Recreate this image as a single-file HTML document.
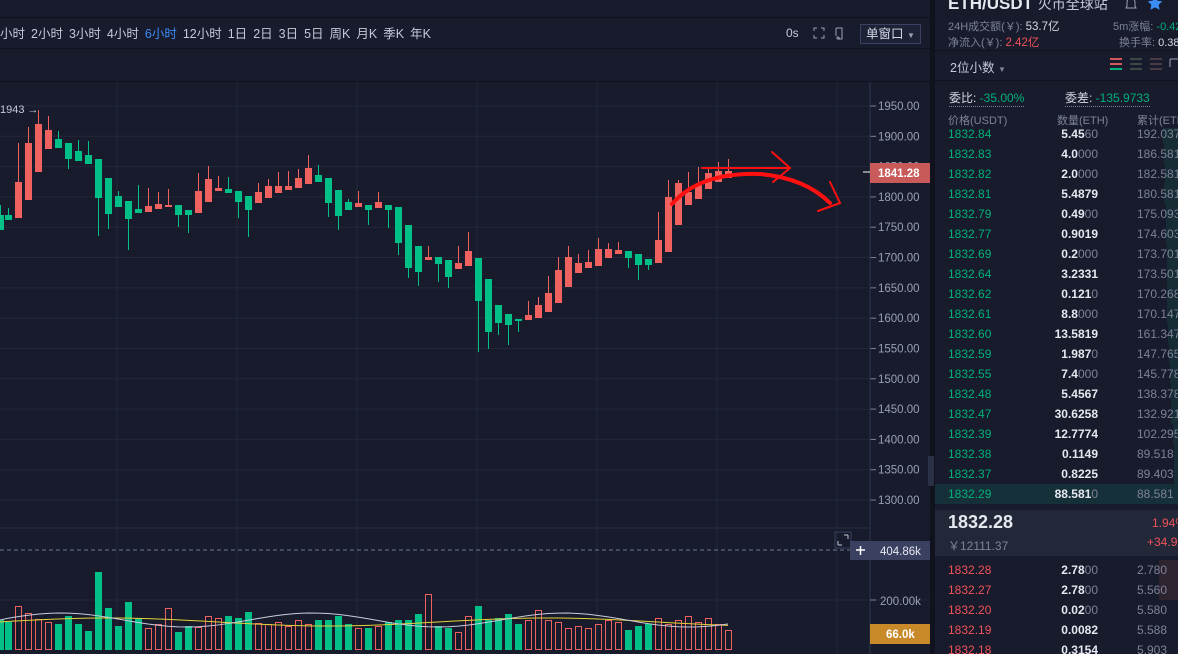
<!DOCTYPE html>
<html><head><meta charset="utf-8"><style>
*{margin:0;padding:0;box-sizing:border-box}
body{width:1178px;height:654px;overflow:hidden;background:#171b2c;font-family:"Liberation Sans","Noto Sans CJK SC",sans-serif;color:#b8bdd0;position:relative}
.abs{position:absolute;white-space:nowrap}
.tb span{margin-right:6px;font-size:12.5px;color:#c4c8d8}
.ob{font-size:12px}
.row{position:absolute;left:0;width:243px;height:20px;line-height:20px}
.row .p{position:absolute;left:13px}
.row .a{position:absolute;right:80px;color:#e6e8f0;font-weight:bold}
.row .a i{font-style:normal;color:#7d8297;font-weight:normal}
.row .c{position:absolute;left:202px;color:#7d8297}
.g{color:#00b07a}.r{color:#f0525a}
</style></head><body>
<div class="abs" style="left:0;top:0;width:930px;height:18px;background:#171b2c;border-bottom:1px solid #0f1220"></div>
<div class="abs tb" style="left:0;top:23px">
<span>小时</span><span>2小时</span><span>3小时</span><span>4小时</span><span style="color:#3b8cf5">6小时</span><span>12小时</span><span>1日</span><span>2日</span><span>3日</span><span>5日</span><span>周K</span><span>月K</span><span>季K</span><span>年K</span></div>
<div class="abs" style="left:786px;top:26px;font-size:12px;color:#c4c8d8">0s</div>
<svg class="abs" style="left:812px;top:26px" width="40" height="16"><g stroke="#9aa0b4" fill="none" stroke-width="1"><path d="M2 5V2h3M9 2h3v3M12 9v3H9M5 12H2V9"/><path d="M24 2h6v11h-3M24 2v8M24 12h4M26 10v4"/></g></svg>
<div class="abs" style="left:860px;top:24px;width:61px;height:20px;border:1px solid #3a4160;background:#1d2237;font-size:12.5px;color:#d6d9e4;line-height:18px;padding-left:5px">单窗口 <span style="font-size:8px;color:#9aa0b4">▼</span></div>
<div class="abs" style="left:0;top:48px;width:930px;height:1px;background:#0f1220"></div>
<div class="abs" style="left:0;top:81px;width:930px;height:1px;background:#0f1220"></div>

<svg class="abs" style="left:0;top:82px" width="930" height="572" id="ch"></svg>

<div class="abs" style="left:930px;top:0;width:5px;height:654px;background:#10131e"></div>
<div class="abs" style="left:928px;top:456px;width:6px;height:30px;background:#2a3045"></div>

<div class="abs ob" style="left:935px;top:0;width:243px;height:654px;background:#171b2c">
<div class="abs" style="left:13px;top:-6px;font-size:17px;color:#e6e8f0;font-weight:bold">ETH/USDT <span style="font-weight:normal;font-size:14px;color:#c4c8d8">火币全球站</span></div>
<svg class="abs" style="left:190px;top:-4px" width="60" height="16"><path d="M6 2c-3 0-4 2-4 5v3l-1 2h10l-1-2V7c0-3-1-5-4-5z" fill="none" stroke="#9aa0b4"/><path d="M30 0l2.3 4.6 5 .7-3.6 3.5.9 5-4.6-2.4-4.6 2.4.9-5-3.6-3.5 5-.7z" fill="#3b8cf5"/><path d="M48 1h6v12" stroke="#9aa0b4" fill="none"/></svg>
<div class="abs" style="left:13px;top:18px;font-size:11px;color:#7d8297">24H成交额(￥): <span style="color:#d6d9e4;font-size:11.5px">53.7亿</span></div>
<div class="abs" style="left:178px;top:18px;font-size:11px;color:#7d8297">5m涨幅: <span class="g">-0.42%</span></div>
<div class="abs" style="left:13px;top:34px;font-size:11px;color:#7d8297">净流入(￥): <span class="r" style="font-size:11.5px">2.42亿</span></div>
<div class="abs" style="left:184px;top:34px;font-size:11px;color:#7d8297">换手率: <span style="color:#d6d9e4">0.38%</span></div>
<div class="abs" style="left:0;top:50px;width:243px;height:1px;background:#0f1220"></div>
<div class="abs" style="left:15px;top:57px;font-size:12.5px;color:#c4c8d8">2位小数 <span style="font-size:8px;color:#7d8297">▼</span></div>
<svg class="abs" style="left:175px;top:57px" width="68" height="14"><g stroke-width="2"><path d="M0 2h12M0 7h12" stroke="#d25a5a"/><path d="M0 12h12" stroke="#00b07a"/><path d="M20 2h12M20 7h12M20 12h12" stroke="#3a4a4a"/><path d="M40 2h12M40 7h12M40 12h12" stroke="#4a3a44"/></g><path d="M60 2h8M60 2v8" stroke="#9aa0b4" fill="none"/></svg>
<div class="abs" style="left:0;top:80px;width:243px;height:1px;background:#0f1220"></div>
<div class="abs" style="left:14px;top:89px;font-size:12px;color:#d6d9e4;border-bottom:1px dotted #7d8297">委比: <span class="g">-35.00%</span></div>
<div class="abs" style="left:130px;top:89px;font-size:12px;color:#d6d9e4;border-bottom:1px dotted #7d8297">委差: <span class="g">-135.9733</span></div>
<div class="abs" style="left:13px;top:112px;font-size:11px;color:#7d8297">价格(USDT)</div>
<div class="abs" style="left:122px;top:112px;font-size:11px;color:#7d8297">数量(ETH)</div>
<div class="abs" style="left:202px;top:112px;font-size:11px;color:#7d8297">累计(ETH)</div>
<div class="abs" style="left:0;top:128px;width:243px;height:377px;overflow:hidden" id="bids"></div>
<div class="abs" style="left:0;top:510px;width:243px;height:46px;background:#232839"></div>
<div class="abs" style="left:13px;top:512px;font-size:18px;color:#e6e8f0;font-weight:bold">1832.28</div>
<div class="abs" style="left:13px;top:537px;font-size:12px;color:#7d8297">￥12111.37</div>
<div class="abs r" style="left:217px;top:516px;font-size:12px">1.94%</div>
<div class="abs r" style="left:212px;top:535px;font-size:12px">+34.92</div>
<div class="abs" style="left:0;top:560px;width:243px;height:94px;overflow:hidden" id="asks"></div>
</div>

<script>
const G='#00c087',R='#f0625f';
const C=[[0,215,230,205,'g'],
[8,215,220,208,'g'],[18,182,218,143,'r'],[28,143,200,127,'r'],[38,124,172,110,'r'],[48,130,149,116,'r'],[58,139,148,131,'g'],[68,143,159,169,'g'],[78,151,161,140,'g'],[88,155,164,141,'g'],[98,159,198,236,'g'],[108,178,214,229,'g'],[118,196,207,191,'g'],[128,201,219,250,'g'],[138,209,213,185,'g'],[148,206,212,188,'r'],[158,204,209,192,'r'],[168,205,207,189,'r'],[178,205,215,227,'g'],[188,210,215,233,'g'],[198,191,213,173,'r'],[208,179,202,166,'r'],[218,188,191,176,'r'],[228,189,193,177,'g'],[238,191,202,218,'g'],[248,196,210,237,'g'],[258,192,203,183,'r'],[268,186,198,179,'r'],[278,186,193,172,'r'],[288,186,190,171,'r'],[298,178,188,169,'r'],[308,168,184,155,'r'],[318,175,182,165,'g'],[328,178,203,217,'g'],[338,190,216,230,'g'],[348,202,210,199,'g'],[358,203,207,191,'r'],[368,205,210,225,'g'],[378,202,208,192,'r'],[388,205,210,228,'g'],[398,207,243,255,'g'],[408,225,268,278,'g'],[418,246,272,286,'g'],[428,257,260,246,'r'],[438,257,264,282,'g'],[448,260,277,288,'g'],[458,263,269,246,'r'],[468,251,266,232,'r'],[478,258,301,352,'g'],[488,279,332,349,'g'],[498,305,323,335,'g'],[508,314,325,345,'g'],[518,319,321,332,'g'],[528,315,320,301,'r'],[538,305,318,297,'r'],[548,293,312,276,'r'],[558,270,303,257,'r'],[568,257,287,246,'r'],[578,263,273,254,'r'],[588,262,268,250,'r'],[598,249,266,238,'r'],[608,249,258,243,'r'],[618,250,254,242,'r'],[628,251,258,268,'g'],[638,254,265,280,'g'],[648,259,265,270,'g'],[658,240,263,212,'r'],[668,197,252,180,'r'],[678,183,225,180,'r'],[688,192,205,172,'r'],[698,184,199,167,'r'],[708,173,189,167,'r'],[718,171,182,162,'r'],[728,171,178,159,'r']];
let s='';const oy=-82;
for(let p=1950;p>=1300;p-=50){const y=106+(1950-p)*0.6062+oy;s+=`<line x1="0" x2="870" y1="${y}" y2="${y}" stroke="#222839"/><line x1="870" x2="876" y1="${y}" y2="${y}" stroke="#7d8297"/><text x="878" y="${y+4}" fill="#9aa0b4" font-size="11.5" font-family="Liberation Sans">${p}.00</text>`;}
for(let x=117;x<870;x+=120)s+=`<line x1="${x}" x2="${x}" y1="0" y2="572" stroke="#222839"/>`;
s+=`<line x1="870" x2="870" y1="0" y2="572" stroke="#2e3550"/>`;
s+=`<line x1="0" x2="870" y1="${528+oy}" y2="${528+oy}" stroke="#2a3045"/><line x1="0" x2="930" y1="${600+oy}" y2="${600+oy}" stroke="#222839"/>`;
s+=`<line x1="0" x2="850" y1="${550+oy}" y2="${550+oy}" stroke="#6d7890" stroke-dasharray="4,3"/>`;
for(const c of C){const col=c[4]=='g'?G:R;
s+=`<line x1="${c[0]+.5}" x2="${c[0]+.5}" y1="${Math.min(c[3],c[1])+oy}" y2="${Math.max(c[3],c[2])+oy}" stroke="${col}"/>`;
s+=`<rect x="${c[0]-3}" y="${c[1]+oy}" width="7" height="${Math.max(2,c[2]-c[1])}" fill="${col}"/>`;}
const V=[26,24,40,33,27,24,22,30,22,15,74,38,20,44,28,18,22,38,14,20,19,30,28,30,28,34,23,22,24,20,26,22,26,26,30,22,18,18,20,24,26,26,32,52,20,18,14,30,40,26,28,32,22,26,36,26,24,18,20,18,22,26,24,16,20,22,28,22,26,30,24,28,22,16];
for(let i=0;i<C.length;i++){const c=C[i];const h=V[i%V.length]+4;const y=650-h+oy;
if(c[4]=='g')s+=`<rect x="${c[0]-3}" y="${y}" width="7" height="${h}" fill="${G}"/>`;else s+=`<rect x="${c[0]-2.5}" y="${y+.5}" width="6" height="${h-1}" fill="none" stroke="${R}"/>`;}
let py='',pw='';for(let i=0;i<C.length;i++){const x=C[i][0];const y1=622-Math.sin(i/7)*4+oy;const y2=620-Math.sin(i/4)*7+oy;py+=(i?'L':'M')+x+' '+y1;pw+=(i?'L':'M')+x+' '+y2;}
s+=`<path d="${py}" stroke="#e6d23a" fill="none"/><path d="${pw}" stroke="#c8ccdc" fill="none"/>`;
s+=`<g stroke="#ff1010" fill="none" stroke-linecap="round"><path d="M672 ${204+oy}Q700 ${172+oy} 760 ${174+oy}Q805 ${178+oy} 830 ${203+oy}" stroke-width="4"/><path d="M702 ${168+oy}H790M772 ${152+oy}L790 ${168+oy}L773 ${182+oy}M830 ${182+oy}L840 ${203+oy}L818 ${211+oy}" stroke-width="2"/></g>`;
s+=`<rect x="870" y="${163+oy}" width="60" height="20" fill="#c85a5a"/><line x1="863" x2="870" y1="${172+oy}" y2="${172+oy}" stroke="#fff"/><text x="878" y="${177+oy}" fill="#fff" font-size="11.5" font-weight="bold" font-family="Liberation Sans">1841.28</text>`;
s+=`<rect x="835" y="${532+oy}" width="16" height="16" fill="none" stroke="#3a4160"/><path d="M838 ${545+oy}v-4M838 ${545+oy}h4M848 ${535+oy}v4M848 ${535+oy}h-4" stroke="#c4c8d8"/>`;
s+=`<rect x="850" y="${541+oy}" width="80" height="19" fill="#3a4160"/><path d="M856 ${550+oy}h9M860.5 ${546+oy}v9" stroke="#fff" stroke-width="1.5"/><text x="880" y="${555+oy}" fill="#e6e8f0" font-size="11.5" font-family="Liberation Sans">404.86k</text>`;
s+=`<line x1="870" x2="876" y1="${600+oy}" y2="${600+oy}" stroke="#7d8297"/><text x="880" y="${605+oy}" fill="#9aa0b4" font-size="11.5" font-family="Liberation Sans">200.00k</text>`;
s+=`<rect x="870" y="${624+oy}" width="60" height="20" fill="#c88a28"/><text x="886" y="${638+oy}" fill="#fff" font-size="11.5" font-weight="bold" font-family="Liberation Sans">66.0k</text>`;
s+=`<text x="0" y="${113+oy}" fill="#c4c8d8" font-size="11" font-family="Liberation Sans">1943 →</text>`;
document.getElementById('ch').innerHTML=s;
const B=[['1832.84','5.45','60','192.037',60],['1832.83','4.0','000','186.581',55],['1832.82','2.0','000','182.581',52],['1832.81','5.4879','','180.581',58],['1832.79','0.49','00','175.093',48],['1832.77','0.9019','','174.603',48],['1832.69','0.2','000','173.701',46],['1832.64','3.2331','','173.501',46],['1832.62','0.121','0','170.268',44],['1832.61','8.8','000','170.147',44],['1832.60','13.5819','','161.347',40],['1832.59','1.987','0','147.765',36],['1832.55','7.4','000','145.778',34],['1832.48','5.4567','','138.378',30],['1832.47','30.6258','','132.921',28],['1832.39','12.7774','','102.295',22],['1832.38','0.1149','','89.518',16],['1832.37','0.8225','','89.403',16],['1832.29','88.581','0','88.581',243]];
let h='';B.forEach((b,i)=>{const y=i*20-4;h+=`<div class="row" style="top:${y}px">${b[4]==243?'<div style="position:absolute;left:0;top:0;width:243px;height:20px;background:#16303a"></div>':`<div style="position:absolute;right:0;top:0;width:${b[4]*0.25}px;height:20px;background:#17343a;opacity:.7"></div>`}<span class="p g">${b[0]}</span><span class="a">${b[1]}<i>${b[2]}</i></span><span class="c">${b[3]}</span></div>`});
document.getElementById('bids').innerHTML=h;
const A=[['1832.28','2.78','00','2.780',6],['1832.27','2.78','00','5.560',6],['1832.20','0.02','00','5.580',0],['1832.19','0.0082','','5.588',0],['1832.18','0.3154','','5.903',0]];
h='';A.forEach((b,i)=>{h+=`<div class="row" style="top:${i*20}px">${b[4]?'<div style="position:absolute;left:224px;top:0;width:19px;height:20px;background:#2e2430"></div>':''}<span class="p r">${b[0]}</span><span class="a">${b[1]}<i>${b[2]}</i></span><span class="c">${b[3]}</span></div>`});
document.getElementById('asks').innerHTML=h;
</script>
</body></html>
